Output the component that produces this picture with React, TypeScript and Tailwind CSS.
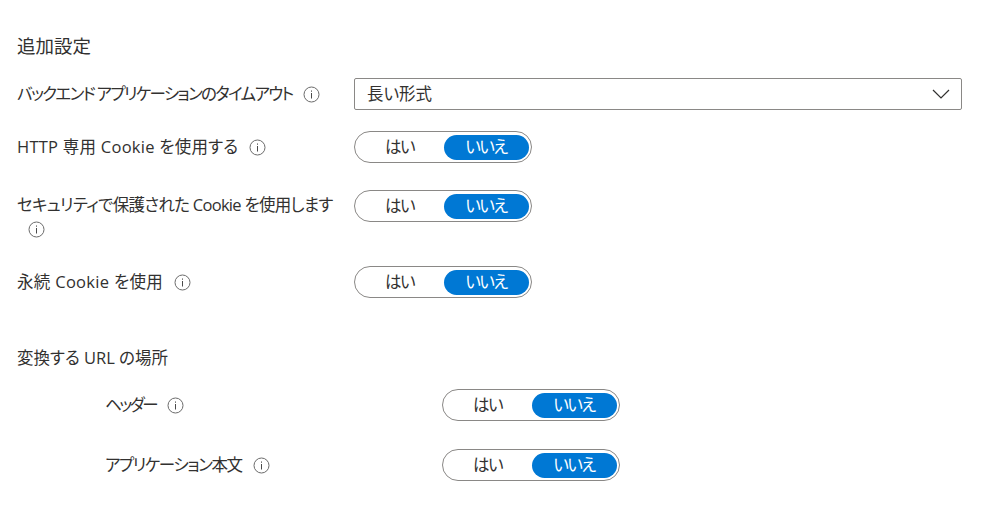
const FONT = "font-['Open_Sans','Noto_Sans_CJK_JP',sans-serif] [font-feature-settings:'palt']";

function InfoIcon() {
  return (
    <svg width="17" height="17" viewBox="0 0 17 17" fill="none" className="shrink-0">
      <circle cx="8.5" cy="8.5" r="7.5" stroke="#6b6b6b" strokeWidth="1" />
      <rect x="8" y="7" width="1" height="5.5" fill="#4a4a4a" />
      <rect x="8" y="4.5" width="1" height="1.2" fill="#4a4a4a" />
    </svg>
  );
}

function Toggle() {
  return (
    <div className="flex h-8 w-[178px] shrink-0 items-center rounded-full border border-[#8a8886] bg-white pl-[3px] pt-[1px] text-[16.5px] tracking-[-1.5px] text-[#323130]">
      <div className="flex h-[25px] w-[86px] items-center justify-center pr-[3px]">はい</div>
      <div className="flex h-[25px] w-[85px] items-center justify-center rounded-full bg-[#0078d4] pr-[1px] text-white">いいえ</div>
    </div>
  );
}

function Label({ text, spacing, wrapIcon }: { text: string; spacing: string; wrapIcon?: boolean }) {
  if (wrapIcon) {
    return (
      <div className="w-[337px] shrink-0 pt-[3px] text-[16.5px] leading-[24px] text-[#323130]">
        <div className={`whitespace-nowrap ${spacing}`}>{text}</div>
        <div className="mt-[4px] pl-[11px]"><InfoIcon /></div>
      </div>
    );
  }
  return (
    <div className="flex h-8 w-[337px] shrink-0 items-center gap-[11px] text-[16.5px] text-[#323130]">
      <span className={`whitespace-nowrap ${spacing}`}>{text}</span>
      <InfoIcon />
    </div>
  );
}

export default function App() {
  return (
    <div className={`h-[513px] w-[993px] overflow-hidden bg-white pl-[17px] pt-[35px] ${FONT}`}>
      <div className="h-[22px] text-[18.5px] leading-[22px] text-[#323130]">追加設定</div>

      <div className="mt-[21px] flex">
        <Label text="バックエンド アプリケーションのタイムアウト" spacing="tracking-[-1.65px]" />
        <div className="flex h-8 w-[608px] items-center justify-between rounded-[2px] border border-[#8a8886] pl-3 pr-[11px] text-[16.5px] text-[#323130]">
          <span>長い形式</span>
          <svg width="18" height="10" viewBox="0 0 18 10" fill="none">
            <path d="M1 1l8 8 8-8" stroke="#323130" strokeWidth="1.2" />
          </svg>
        </div>
      </div>

      <div className="mt-[21px] flex">
        <Label text="HTTP 専用 Cookie を使用する" spacing="tracking-[0.25px]" />
        <Toggle />
      </div>

      <div className="mt-[27px] flex">
        <Label text="セキュリティで保護された Cookie を使用します" spacing="tracking-[-0.7px]" wrapIcon />
        <Toggle />
      </div>

      <div className="mt-[28px] flex">
        <Label text="永続 Cookie を使用" spacing="tracking-[0.3px]" />
        <Toggle />
      </div>

      <div className="mt-[49px] h-[22px] text-[16.5px] leading-[22px] text-[#323130]">変換する URL の場所</div>

      <div className="mt-[20px] flex pl-[88px]">
        <Label text="ヘッダー" spacing="tracking-[-2.5px]" />
        <Toggle />
      </div>

      <div className="mt-[28px] flex pl-[88px]">
        <Label text="アプリケーション本文" spacing="tracking-[-1.4px]" />
        <Toggle />
      </div>
    </div>
  );
}
